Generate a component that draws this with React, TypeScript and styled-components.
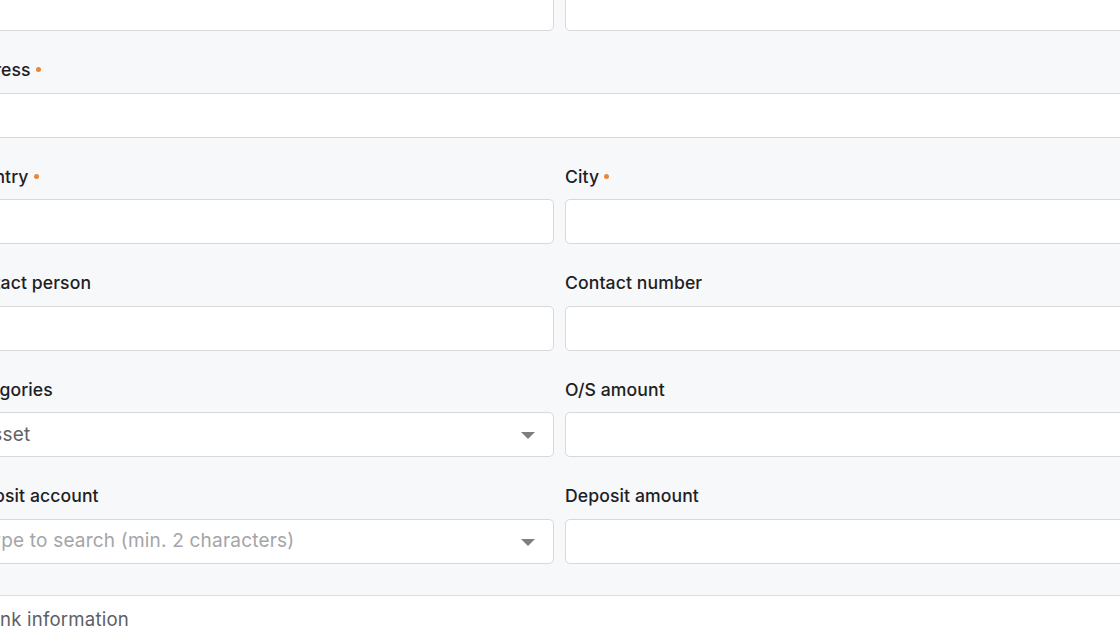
import React from 'react';
import styled, { createGlobalStyle } from 'styled-components';

const GlobalStyle = createGlobalStyle`
  html, body {
    margin: 0;
    padding: 0;
    background: #ffffff;
    overflow: hidden;
  }
  * {
    box-sizing: border-box;
  }
`;

const Page = styled.div`
  width: 1120px;
  height: 628px;
  overflow: hidden;
  font-family: Inter, "Noto Sans", sans-serif;
`;

const FormPanel = styled.div`
  background: #f7f8fa;
  margin-top: -14px;
  padding-bottom: 31.5px;
  border-bottom: 1.5px solid #dcdee1;
`;

const Grid = styled.div`
  display: grid;
  grid-template-columns: 594px 594px;
  column-gap: 11px;
  row-gap: 27.5px;
  margin-left: -40px;
  width: 1199px;
`;

const Field = styled.div<{ $wide?: boolean }>`
  display: flex;
  flex-direction: column;
  gap: 12px;
  grid-column: ${(p) => (p.$wide ? '1 / span 2' : 'auto')};
`;

const Label = styled.label`
  display: flex;
  align-items: center;
  gap: 5px;
  height: 22px;
  font-size: 17.6px;
  font-weight: 500;
  color: #1d2125;
  letter-spacing: 0.1px;
`;

const Required = styled.span`
  width: 5px;
  height: 5px;
  border-radius: 50%;
  background: #e8873a;
`;

const Input = styled.div`
  height: 45px;
  background: #ffffff;
  border: 1.5px solid #d6d8db;
  border-radius: 5px;
  display: flex;
  align-items: center;
  padding: 0 18px 0 18px;
`;

const Value = styled.span<{ $placeholder?: boolean }>`
  flex: 1;
  font-size: 19px;
  letter-spacing: 0.2px;
  color: ${(p) => (p.$placeholder ? '#a3a5a8' : '#5f6266')};
  margin-top: -1px;
`;

const Caret = styled.span`
  width: 0;
  height: 0;
  border-left: 7px solid transparent;
  border-right: 7px solid transparent;
  border-top: 7px solid #7d7f82;
  margin-top: 2px;
`;

const SectionTitle = styled.div`
  margin-left: -23px;
  padding-top: 12px;
  font-size: 18.6px;
  letter-spacing: 0.2px;
  color: #5c6066;
`;

type FieldProps = {
  label?: string;
  required?: boolean;
  wide?: boolean;
  value?: string;
  placeholder?: string;
  select?: boolean;
};

const FormField: React.FC<FieldProps> = ({ label, required, wide, value, placeholder, select }) => (
  <Field $wide={wide}>
    {label && (
      <Label>
        {label}
        {required && <Required />}
      </Label>
    )}
    <Input>
      <Value $placeholder={!value}>{value || placeholder}</Value>
      {select && <Caret />}
    </Input>
  </Field>
);

export default function App() {
  return (
    <Page>
      <GlobalStyle />
      <FormPanel>
        <Grid>
          <FormField />
          <FormField />
          <FormField label="Address" required wide />
          <FormField label="Country" required />
          <FormField label="City" required />
          <FormField label="Contact person" />
          <FormField label="Contact number" />
          <FormField label="Categories" value="Asset" select />
          <FormField label="O/S amount" />
          <FormField label="Deposit account" placeholder="Type to search (min. 2 characters)" select />
          <FormField label="Deposit amount" />
        </Grid>
      </FormPanel>
      <SectionTitle>Bank information</SectionTitle>
    </Page>
  );
}
